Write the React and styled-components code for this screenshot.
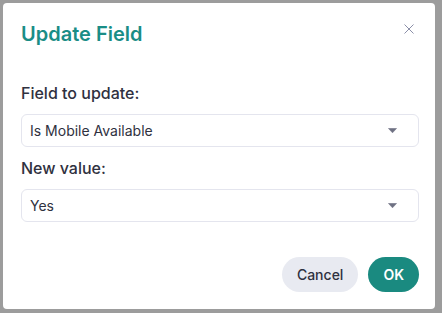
import React from "react";
import styled, { createGlobalStyle } from "styled-components";

const Global = createGlobalStyle`
  html, body { margin: 0; padding: 0; background: #9c9c9c; }
  body { font-family: Inter, "Noto Sans", sans-serif; }
  * { box-sizing: border-box; }
`;

const Backdrop = styled.div`
  width: 442px;
  height: 313px;
  padding: 3px 7px 4px 3px;
  background: #9c9c9c;
`;

const Dialog = styled.div`
  height: 100%;
  background: #ffffff;
  border-radius: 4px;
  padding: 17px 16px 17px 18px;
  display: flex;
  flex-direction: column;
`;

const Header = styled.div`
  display: flex;
  justify-content: space-between;
  align-items: flex-start;
  height: 28px;
`;

const Title = styled.h2`
  margin: 0;
  font-size: 20px;
  line-height: 28px;
  font-weight: 600;
  color: #1a8d86;
`;

const CloseButton = styled.button`
  border: none;
  background: none;
  padding: 0;
  margin: 4px 5px 0 0;
  width: 10px;
  height: 10px;
  display: flex;
  cursor: pointer;
`;

const Body = styled.div`
  margin-top: 33px;
  display: flex;
  flex-direction: column;
`;

const Label = styled.label`
  font-size: 16px;
  line-height: 24px;
  font-weight: 500;
  color: #2f3140;
  margin-bottom: 9px;
  margin-top: ${(p) => (p.$first ? "0" : "9px")};
`;

const Select = styled.div`
  height: 33px;
  border: 1px solid #e4e5ee;
  border-radius: 6px;
  display: flex;
  align-items: center;
  justify-content: space-between;
  padding-left: 8px;
  padding-right: 21px;
  font-size: 14px;
  color: #2f3140;
`;

const Value = styled.span`
  display: block;
`;

const Footer = styled.div`
  margin-top: auto;
  display: flex;
  justify-content: flex-end;
  gap: 10px;
`;

const Button = styled.button`
  height: 35px;
  border: none;
  border-radius: 18px;
  padding: 0 15px;
  font-family: Inter, "Noto Sans", sans-serif;
  font-size: 14px;
  font-weight: ${(p) => (p.$primary ? 600 : 500)};
  background: ${(p) => (p.$primary ? "#1a8a80" : "#e8eaf1")};
  color: ${(p) => (p.$primary ? "#ffffff" : "#2f3140")};
  cursor: pointer;
`;

const Caret = () => (
  <svg width="9" height="5" viewBox="0 0 9 5">
    <path d="M0.5 0.5 H8.5 L4.5 4.8 Z" fill="#6e7183" stroke="#6e7183" strokeWidth="0.6" strokeLinejoin="round" />
  </svg>
);

export default function App() {
  return (
    <>
      <Global />
      <Backdrop>
        <Dialog>
          <Header>
            <Title>Update Field</Title>
            <CloseButton aria-label="Close">
              <svg width="10" height="10" viewBox="0 0 10 10">
                <path d="M0.5 0.5 L9.5 9.5 M9.5 0.5 L0.5 9.5" stroke="#8b8fa8" strokeWidth="1" />
              </svg>
            </CloseButton>
          </Header>
          <Body>
            <Label $first>Field to update:</Label>
            <Select>
              <Value>Is Mobile Available</Value>
              <Caret />
            </Select>
            <Label>New value:</Label>
            <Select>
              <Value>Yes</Value>
              <Caret />
            </Select>
          </Body>
          <Footer>
            <Button>Cancel</Button>
            <Button $primary>OK</Button>
          </Footer>
        </Dialog>
      </Backdrop>
    </>
  );
}
